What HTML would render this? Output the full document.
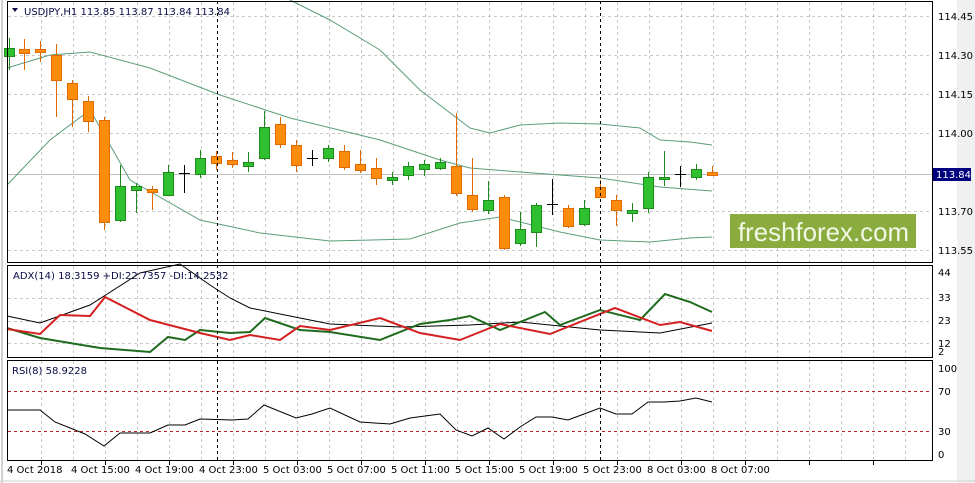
<!DOCTYPE html>
<html><head><meta charset="utf-8"><style>
html,body{margin:0;padding:0;background:#fff;}
svg{display:block;font-family:Tahoma,"DejaVu Sans","Liberation Sans",sans-serif;}
</style></head><body>
<svg id="s" width="975" height="483" xmlns="http://www.w3.org/2000/svg">
<rect x="0" y="0" width="975" height="483" fill="#fff"/>
<rect x="957" y="0" width="18" height="483" fill="#f0f0f0"/>
<line x1="2" y1="0" x2="2" y2="483" stroke="#a0a0a0"/>
<line x1="0" y1="481" x2="975" y2="481" stroke="#d0d0d0"/>
<g id="grid" stroke="#c8c8c8" stroke-dasharray="3,3" stroke-width="1"></g>
<g id="draw"></g>
<rect x="7.5" y="1.5" width="925" height="261" fill="none" stroke="#000"/>
<rect x="7.5" y="265.5" width="925" height="92" fill="none" stroke="#000"/>
<rect x="7.5" y="360.5" width="925" height="100" fill="none" stroke="#000"/>
<line x1="217.5" y1="1" x2="217.5" y2="461" stroke="#000" stroke-dasharray="3,3"/>
<line x1="600.5" y1="1" x2="600.5" y2="461" stroke="#000" stroke-dasharray="3,3"/>
<rect x="730" y="214" width="186" height="34" fill="#8aab3e"/>
<text x="738" y="241" font-family="'Liberation Sans',sans-serif" font-size="26" fill="#f2f8e6" textLength="171" lengthAdjust="spacingAndGlyphs">freshforex.com</text>
<g font-size="10" fill="#0a0a46">
<path d="M12 8 L18 8 L15 12 Z" fill="#0a0a46"/>
<text x="24" y="15">USDJPY,H1  113.85 113.87 113.84 113.84</text>
<text x="13" y="279">ADX(14) 18.3159 +DI:22.7357 -DI:14.2532</text>
<text x="12" y="374">RSI(8) 58.9228</text>
</g>
<g font-size="10" fill="#000">
<text x="938" y="20">114.45</text>
<text x="938" y="59">114.30</text>
<text x="938" y="98">114.15</text>
<text x="938" y="137">114.00</text>
<text x="938" y="215">113.70</text>
<text x="938" y="254">113.55</text>
<text x="938" y="276">44</text>
<text x="938" y="301">33</text>
<text x="938" y="324">23</text>
<text x="938" y="347">12</text>
<text x="938" y="355">2</text>
<text x="938" y="372">100</text>
<text x="938" y="395">70</text>
<text x="938" y="435">30</text>
<text x="938" y="458">0</text>
</g>
<rect x="933" y="168" width="38" height="13" fill="#00007f"/>
<text x="936" y="178" font-size="10" fill="#fff">113.84</text>
<g font-size="10" fill="#000">
<text x="7" y="473">4 Oct 2018</text>
<text x="71" y="473">4 Oct 15:00</text>
<text x="135" y="473">4 Oct 19:00</text>
<text x="199" y="473">4 Oct 23:00</text>
<text x="263" y="473">5 Oct 03:00</text>
<text x="327" y="473">5 Oct 07:00</text>
<text x="391" y="473">5 Oct 11:00</text>
<text x="455" y="473">5 Oct 15:00</text>
<text x="519" y="473">5 Oct 19:00</text>
<text x="583" y="473">5 Oct 23:00</text>
<text x="647" y="473">8 Oct 03:00</text>
<text x="711" y="473">8 Oct 07:00</text>
</g>
</svg>
<script>
var NS="http://www.w3.org/2000/svg";
function el(p,t,a){var e=document.createElementNS(NS,t);for(var k in a)e.setAttribute(k,a[k]);p.appendChild(e);return e;}
var g=document.getElementById('grid'),d=document.getElementById('draw');
for(var x=41;x<933;x+=32){el(g,'line',{x1:x+.5,y1:2,x2:x+.5,y2:262});el(g,'line',{x1:x+.5,y1:266,x2:x+.5,y2:357});el(g,'line',{x1:x+.5,y1:361,x2:x+.5,y2:460});}
[16,55,94,133,211,250].forEach(function(y){el(g,'line',{x1:8,y1:y+.5,x2:932,y2:y+.5});});
el(g,'line',{x1:8,y1:174.5,x2:932,y2:174.5,stroke:'#c0c0c0','stroke-dasharray':'none'});
[298,321,343].forEach(function(y){el(g,'line',{x1:8,y1:y+.5,x2:932,y2:y+.5});});
[391,431].forEach(function(y){el(d,'line',{x1:8,y1:y+.5,x2:932,y2:y+.5,stroke:'#c02020','stroke-dasharray':'3,3'});});
for(var x=41;x<933;x+=64){el(d,'line',{x1:x+.5,y1:461,x2:x+.5,y2:465,stroke:'#000'});}
function pl(pts,c,w){el(d,'polyline',{points:pts,fill:'none',stroke:c,'stroke-width':w});}
pl("290,0 330,20 380,50 420,90 470,128 490,133 520,125 560,123 600,124 640,128 660,140 690,142 712,145","#5a9e78",1);
pl("7,68 50,55 90,52 150,68 220,95 290,118 380,140 440,160 470,168 520,172 600,178 660,187 712,191","#5a9e78",1);
pl("7,185 50,140 90,110 130,180 200,220 260,233 330,241 410,239 460,223 500,217 560,232 600,240 650,242 690,238 712,237","#5a9e78",1);
pl("7,316 40,323 90,305 140,273 180,264 210,285 230,298 250,308 280,314 330,324 400,327 470,325 520,322 600,330 660,333 712,323","#000",1);
pl("7,328 40,338 100,348 150,352 168,337 185,340 200,330 230,333 250,332 265,318 300,330 330,332 380,340 420,324 450,320 470,316 500,330 545,312 560,325 600,310 640,320 665,294 690,302 712,312","#1e6b1e",2);
pl("7,329 40,334 60,315 90,316 105,297 150,320 200,333 230,340 250,335 280,340 300,326 330,330 380,318 420,333 460,340 500,324 550,334 615,308 660,325 680,322 712,331","#d42020",2);
pl("7,410 40,410 55,422 85,434 104,446 120,433 150,433 168,425 185,425 200,419 232,420 248,419 264,405 296,418 312,414 330,408 360,422 390,424 410,418 440,414 456,430 472,436 488,428 504,439 520,427 536,417 552,417 568,420 584,414 600,408 616,414 632,414 648,402 664,402 680,401 696,398 712,402","#000",1);
var C=[[9,'g',48,56,38,70],[24,'o',49,53,39,70],[40,'o',49,52,41,62],[56,'o',55,80,44,117],[72,'o',83,99,80,127],[88,'o',101,121,96,132],[104,'o',120,222,117,230],[120,'g',186,220,165,222],[136,'g',186,190,183,213],[152,'o',189,192,186,210],[168,'g',172,195,165,196],[184,'k',173,173,165,193],[200,'g',158,174,150,178],[216,'o',156,163,151,170],[232,'o',160,164,152,168],[248,'g',162,166,152,172],[264,'g',127,158,111,160],[280,'o',124,144,117,148],[296,'o',145,165,140,172],[312,'k',158,158,150,166],[328,'g',148,158,145,162],[344,'o',151,167,145,170],[360,'o',164,170,150,173],[376,'o',168,178,158,185],[392,'g',177,180,172,185],[408,'g',166,175,162,180],[424,'g',164,169,160,176],[440,'g',162,168,158,170],[456,'o',166,193,113,196],[472,'o',195,209,158,212],[488,'g',200,210,181,214],[504,'o',197,248,195,250],[520,'g',229,243,212,246],[536,'g',205,232,203,247],[552,'k',204,204,179,215],[568,'o',208,226,205,228],[584,'g',208,224,200,226],[600,'o',187,197,180,198],[616,'o',200,210,195,226],[632,'g',210,213,203,222],[648,'g',177,208,172,213],[664,'g',177,179,151,186],[680,'k',174,174,166,187],[696,'g',169,177,164,180],[712,'o',172,175,166,176]];
C.forEach(function(c){var x=c[0],t=c[1],col=t=='g'?'#2ec02e':t=='o'?'#ff8c0a':'#000',st=t=='g'?'#1e8a1e':t=='o'?'#e06a00':'#000';
el(d,'line',{x1:x+.5,y1:c[4],x2:x+.5,y2:c[5],stroke:st});
if(t=='k'){el(d,'line',{x1:x-5,y1:c[2]+.5,x2:x+6,y2:c[2]+.5,stroke:'#000'});}
else{var h=Math.max(c[3]-c[2],2);el(d,'rect',{x:x-4.5,y:c[2]+.5,width:10,height:h,fill:col,stroke:st});}});
</script>
</body></html>
